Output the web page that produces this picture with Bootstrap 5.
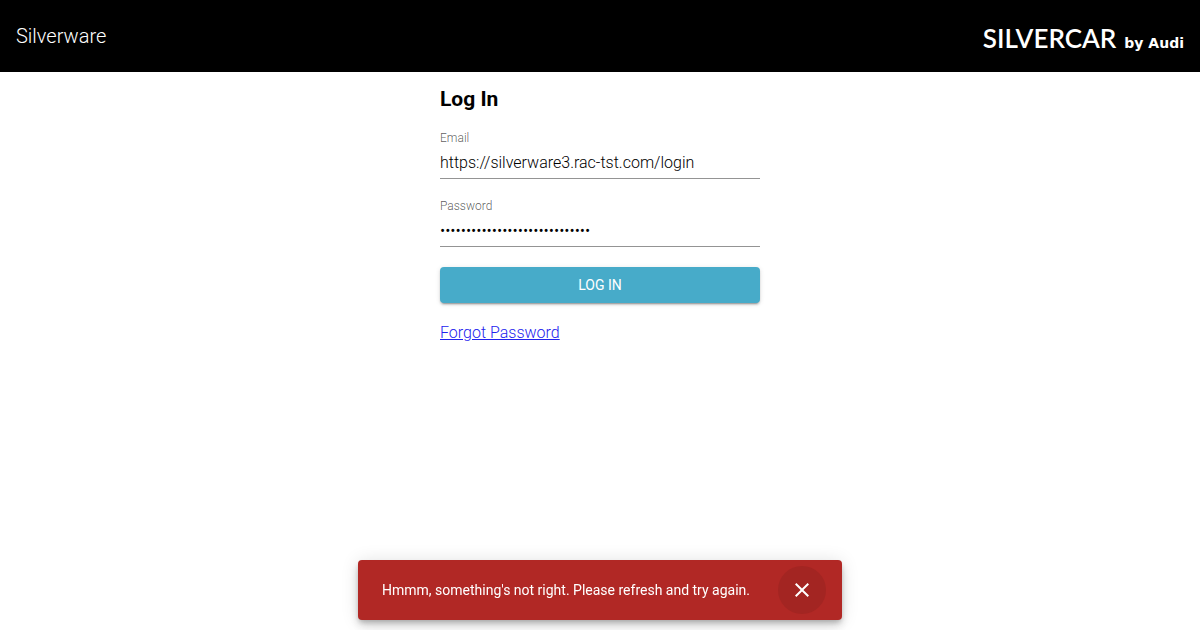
<!DOCTYPE html>
<html lang="en">
<head>
<meta charset="utf-8">
<meta name="viewport" content="width=device-width, initial-scale=1">
<title>Silverware</title>
<link href="https://cdn.jsdelivr.net/npm/bootstrap@5.3.0/dist/css/bootstrap.min.css" rel="stylesheet">
<style>
  body { font-family: Roboto, sans-serif; font-weight: 300; color: rgba(0,0,0,.87); }
  .topbar { background: #000; color: #fff; min-height: 72px; }
  .app-name { font-size: 20px; line-height: 24px; }
  .brand-main { font: 600 26px/32px Lato, sans-serif; }
  .brand-sub { font: 700 14px/16px "DejaVu Sans", sans-serif; }
  .login { max-width: 352px; padding-top: 15px; }
  .login h1 { font-size: 21px; line-height: 24px; font-weight: 700; color: #000; margin: 0; }
  .login form { display: grid; row-gap: 20px; }
  .field-label { font-size: 12px; line-height: 14px; padding-bottom: 2px; color: rgba(0,0,0,.66); }
  .field { border: 0; border-bottom: 1px solid #949494; border-radius: 0; padding: 5px 0 6px; height: 32px; font-size: 16px; line-height: 20px; font-weight: 300; color: #000; }
  .field:focus { box-shadow: none; border-color: #47abc9; }
  .btn-login { --bs-btn-bg: #47abc9; --bs-btn-color: #fff; --bs-btn-hover-bg: #3899b7; --bs-btn-hover-color: #fff; --bs-btn-active-bg: #3899b7; --bs-btn-active-color: #fff;
    border: 0; border-radius: 4px; height: 36px; font-size: 14px; line-height: 24px; font-weight: 400;
    box-shadow: 0 3px 1px -2px rgba(0,0,0,.2), 0 2px 2px 0 rgba(0,0,0,.14), 0 1px 5px 0 rgba(0,0,0,.12); }
  .forgot { font-size: 16px; line-height: 20px; color: #22e; justify-self: start; }
  .snackbar-area { padding-bottom: 10px; }
  .notice { background: #b12825; color: #fff; border-radius: 4px; padding: 6px 16px 6px 24px; min-width: min(484px, 100%); font-size: 14px; line-height: 20px; font-weight: 400;
    box-shadow: 0 3px 5px -1px rgba(0,0,0,.2), 0 6px 10px 0 rgba(0,0,0,.14), 0 1px 18px 0 rgba(0,0,0,.12); }
  .dismiss { width: 48px; height: 48px; border: 0; color: #fff; background: #a32522; }
</style>
</head>
<body class="min-vh-100 d-flex flex-column">
<header class="topbar d-flex align-items-center justify-content-between px-3">
  <div class="app-name">Silverware</div>
  <div class="d-flex align-items-baseline gap-2 pt-1">
    <span class="brand-main">SILVERCAR</span>
    <span class="brand-sub">by Audi</span>
  </div>
</header>
<main class="login container-fluid px-3 flex-grow-1">
  <form>
    <h1>Log In</h1>
    <div>
      <label class="field-label d-block" for="email">Email</label>
      <input class="field form-control" id="email" type="text" value="https://silverware3.rac-tst.com/login">
    </div>
    <div>
      <label class="field-label d-block" for="password">Password</label>
      <input class="field form-control" id="password" type="password" value="correcthorsebatterystaple1234">
    </div>
    <button class="btn btn-login w-100" type="submit">LOG IN</button>
    <a class="forgot" href="#">Forgot Password</a>
  </form>
</main>
<div class="snackbar-area fixed-bottom d-flex justify-content-center">
  <div class="notice d-flex align-items-center justify-content-between gap-4" role="alert">
    <span>Hmmm, something's not right. Please refresh and try again.</span>
    <button class="dismiss rounded-circle p-0 d-flex align-items-center justify-content-center" type="button" aria-label="Close">
      <svg width="24" height="24" viewBox="0 0 24 24" fill="currentColor" aria-hidden="true"><path d="M19 6.41 17.59 5 12 10.59 6.41 5 5 6.41 10.59 12 5 17.59 6.41 19 12 13.41 17.59 19 19 17.59 13.41 12z"/></svg>
    </button>
  </div>
</div>
<script src="https://cdn.jsdelivr.net/npm/bootstrap@5.3.0/dist/js/bootstrap.bundle.min.js"></script>
</body>
</html>
